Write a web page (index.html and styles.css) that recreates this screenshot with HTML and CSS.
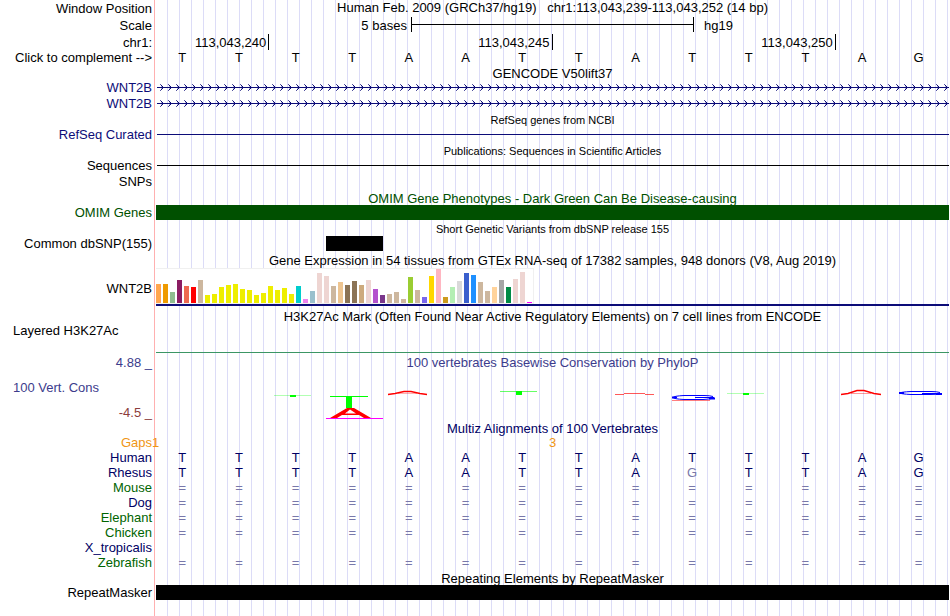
FILE: index.html
```html
<!DOCTYPE html>
<html lang="en">
<head>
<meta charset="utf-8">
<title>Genome browser chr1:113,043,239-113,043,252</title>
<link rel="stylesheet" href="styles.css">
</head>
<body>
<main class="browser">
  <div class="row tall"><span class="label">Window Position</span><h1 class="title">Human Feb. 2009 (GRCh37/hg19) &nbsp; chr1:113,043,239-113,043,252 (14 bp)</h1></div>
  <div class="row tall"><span class="label">Scale</span>
    <div class="data halves"><span class="scale-text">5 bases</span><span class="scale-bar"></span><span class="scale-name">hg19</span></div></div>
  <div class="row ruler"><span class="label">chr1:</span>
    <div class="data halves"><span class="tick first">113,043,240</span><span class="tick">113,043,245</span><span class="tick">113,043,250</span></div></div>
  <div class="row"><button class="label" type="button">Click to complement --&gt;</button><div class="data bases" data-seq="TTTTAATTATTTAG"></div></div>

  <h2 class="title">GENCODE V50lift37</h2>
  <div class="row mid"><a class="label navy" href="#gencode">WNT2B</a>
    <svg class="data gene" aria-hidden="true">
      <defs><pattern id="arrows" width="8" height="16" patternUnits="userSpaceOnUse" fill="#0c0c78"><path d="M5 5h1v1h-1z M6 6h1v1h-1z M7 7h1v1h-1z M6 8h1v1h-1z M5 9h1v1h-1z"/><path d="M4 4h1v1h-1z M4 10h1v1h-1z" opacity=".7"/><path d="M5 6h1v1h-1z M5 8h1v1h-1z" opacity=".3"/></pattern></defs>
      <rect x="1" y="7" width="100%" height="1" fill="#0c0c78"/><rect width="100%" height="16" fill="url(#arrows)"/></svg></div>
  <div class="row mid"><a class="label navy" href="#gencode">WNT2B</a>
    <svg class="data gene" aria-hidden="true"><rect x="1" y="7" width="100%" height="1" fill="#0c0c78"/><rect width="100%" height="16" fill="url(#arrows)"/></svg></div>
  <h2 class="title small snug">RefSeq genes from NCBI</h2>
  <div class="row"><a class="label navy" href="#refseq">RefSeq Curated</a><div class="data line navy"></div></div>
  <h2 class="title small">Publications: Sequences in Scientific Articles</h2>
  <div class="row"><a class="label" href="#pubs">Sequences</a><div class="data line"></div></div>
  <div class="row tall"><a class="label" href="#snps">SNPs</a></div>

  <h2 class="title green">OMIM Gene Phenotypes - Dark Green Can Be Disease-causing</h2>
  <div class="row"><a class="label green" href="#omim">OMIM Genes</a><div class="data block green-block"></div></div>
  <h2 class="title small">Short Genetic Variants from dbSNP release 155</h2>
  <div class="row"><a class="label" href="#dbsnp">Common dbSNP(155)</a><div class="data halves"><span class="snp"></span></div></div>

  <h2 class="title tall">Gene Expression in 54 tissues from GTEx RNA-seq of 17382 samples, 948 donors (V8, Aug 2019)</h2>
  <div class="row gtex"><a class="label" href="#gtex">WNT2B</a><div class="data gtex-line"><div class="bars" id="bars"></div></div></div>

  <div class="row h3k">
    <a class="label left" href="#h3k27ac">Layered H3K27Ac</a>
    <h2 class="data title-text">H3K27Ac Mark (Often Found Near Active Regulatory Elements) on 7 cell lines from ENCODE</h2>
  </div>

  <div class="row cons">
    <div class="label cons-labels blue"><span>4.88 _</span><a class="left" href="#cons">100 Vert. Cons</a><span class="maroon">-4.5 _</span></div>
    <div class="data">
      <h2 class="title-text blue">100 vertebrates Basewise Conservation by PhyloP</h2>
      <svg class="logo" viewBox="156 370 793 50" preserveAspectRatio="none" role="img" aria-label="Conservation scores per base">
        <g fill="#00ff00">
          <path d="M274 395h37v1h-37z M727 393h37v1h-37z" opacity=".3"/>
          <path d="M500 391h37v1h-37z" opacity=".6"/>
          <path d="M290 395h6v2h-6z M330 396h38v1h-38z M346 396h6v12h-6z M516 391h6v4h-6z M743 393h6v2h-6z"/>
        </g>
        <path d="M330 418L347 408H354L371 418H364L359 415H342L337 418z M345 413.500H356L350 409.500z" fill="#ff0000" fill-rule="evenodd"/>
        <path d="M326 418h57v1h-57z" fill="#ff00ff"/>
        <g fill="none" stroke="#ff0000">
          <path d="M388 394.500L395 393.500L404 391.500H411L420 393.500L427 394.500" stroke-width="1.300"/>
          <path d="M398 393.500H417" opacity=".3"/>
          <path d="M615 394.500H624M645 394.500H654M624 393.500H645" opacity=".65"/>
          <path d="M841 394.500L848 393.500L857 390.500H864L874 393.500L881 394.500" stroke-width="1.500"/>
          <path d="M851 393.500H871" opacity=".4"/>
          <path d="M672 400.500H710" opacity=".5"/>
        </g>
        <g fill="none" stroke="#0000ff">
          <path d="M713 396.500Q710 395.500 704 395.500H684Q674 396 673 397.500Q674 399 684 399.500H703Q712 399 714 397.500H695"/>
          <path d="M672 397.500h5M709 398.500h6" stroke-width="2"/>
          <path d="M940 392.500Q937 391.500 931 391.500H911Q901 392 900 393Q901 394 911 394.500H930Q938 394.500 941 393.500H922"/>
          <path d="M899 393h5M936 394h6" stroke-width="2"/>
        </g>
      </svg>
    </div>
  </div>

  <h2 class="title deep">Multiz Alignments of 100 Vertebrates</h2>
  <div class="row"><span class="label orange">Gaps</span><div class="data halves orange"><span class="gap-one">1</span><span class="gap-three">3</span></div></div>
  <div class="row deep"><span class="label">Human</span><div class="data bases" data-seq="TTTTAATTATTTAG"></div></div>
  <div class="row deep"><span class="label">Rhesus</span><div class="data bases" data-seq="TTTTAATTAgTTAG"></div></div>
  <div class="row forest"><span class="label">Mouse</span><div class="data bases" data-seq="=============="></div></div>
  <div class="row deep"><span class="label">Dog</span><div class="data bases" data-seq="=============="></div></div>
  <div class="row forest"><span class="label">Elephant</span><div class="data bases" data-seq="=============="></div></div>
  <div class="row forest"><span class="label">Chicken</span><div class="data bases" data-seq="=============="></div></div>
  <div class="row deep"><span class="label">X_tropicalis</span></div>
  <div class="row forest"><span class="label">Zebrafish</span><div class="data bases" data-seq="=============="></div></div>
  <h2 class="title">Repeating Elements by RepeatMasker</h2>
  <div class="row"><a class="label" href="#rmsk">RepeatMasker</a><div class="data block"></div></div>
</main>
<script src="tracks.js"></script>
</body>
</html>
```
FILE: styles.css
```css
* { box-sizing: border-box; }

body {
  margin: 0;
  background: #fff;
  color: #000;
  font: 13px/15px "Liberation Sans", Arial, sans-serif;
}

a { color: inherit; text-decoration: none; }

.browser {
  min-height: 100vh;
  padding-right: 1px;
  background:
    linear-gradient(#ffb0b0, #ffb0b0) 154px 0 / 1px 100% no-repeat,
    repeating-linear-gradient(90deg, transparent 0 11px, #dcdcf7 11px 12px) 156px 0 / 100% 100% no-repeat;
}

.row {
  display: grid;
  grid-template-columns: 152px minmax(0, 1fr);
  grid-template-rows: 100%;
  column-gap: 4px;
  height: 15px;
}

.mid { height: 16px; line-height: 16px; }
.tall { height: 17px; line-height: 17px; }
.ruler { height: 16px; line-height: 18px; }

.label {
  display: block;
  padding: 0;
  border: 0;
  background: none;
  color: inherit;
  font: inherit;
  text-align: right;
  white-space: nowrap;
}

.left { padding-left: 13px; text-align: left; }

.title,
.title-text {
  margin: 0;
  font-size: 13px;
  font-weight: 400;
  text-align: center;
  white-space: nowrap;
}
h1.title { line-height: 15px; }

h2.title { height: 15px; padding: 1px 0 0 156px; }
h2.title.tall { height: 17px; }
h2.title.small { height: 16px; padding-top: 2px; font-size: 11px; }
h2.title.snug { height: 15px; padding-top: 1px; }

.navy { color: #0c0c78; }
.green { color: #005000; }
.blue { color: #3c3c8c; }
.maroon { color: #8c3c3c; }
.deep { color: #000064; }
.forest { color: #006400; }
.orange { color: #f09614; }

.halves { display: grid; grid-template-columns: repeat(28, minmax(0, 1fr)); }

.scale-text { grid-column: 1 / 10; padding-right: 4px; text-align: right; }
.scale-name { grid-column: 20 / 29; padding-left: 10px; }
.scale-bar {
  grid-column: 10 / 20;
  height: 15px;
  border: solid #000;
  border-width: 0 1px;
  background: linear-gradient(#000, #000) center / 100% 1px no-repeat;
}

.tick {
  grid-column: span 10;
  height: 16px;
  padding-right: 2px;
  border-right: 1px solid #000;
  text-align: right;
}
.tick.first { grid-column: 1 / 5; }

.bases {
  display: grid;
  grid-template-columns: repeat(14, minmax(0, 1fr));
  text-align: center;
}
.bases span { padding-right: 4px; }
.bases .faded { color: #7878aa; }

.gene { width: 100%; height: 16px; }
.line { height: 1px; margin: 7px 0 0 1px; background: currentColor; }
.block { background: #000; }
.green-block { background: #005000; }
.snp { grid-column: 7 / 9; background: #000; }

.gtex { height: 38px; line-height: 42px; }
.gtex-line { border-bottom: 2px solid #0c0c78; }
.bars {
  display: flex;
  align-items: flex-end;
  gap: 2px;
  width: 378px;
  height: 36px;
  border: solid #f0f0f0;
  border-width: 1px 1px 1px 0;
  background: #fff;
}
.bars span { width: 5px; }

.h3k {
  height: 47px;
  background: linear-gradient(#3c9664, #3c9664) 156px 100% / 100% 1px no-repeat;
}
.h3k .label { padding-top: 17px; }
.h3k h2 { padding-top: 3px; }

.cons { height: 67px; }
.cons-labels { display: flex; flex-direction: column; justify-content: space-between; padding: 2px 0 0; }
.cons h2 { padding-top: 2px; }
.logo { display: block; width: 100%; height: 50px; }

.gap-one { margin-left: -4px; }
.gap-three { grid-column: 14 / 16; text-align: center; }
```
FILE: tracks.js
```js
// Base letters, one cell per position; lower case marks a mismatch.
document.querySelectorAll("[data-seq]").forEach(function (row) {
  for (const base of row.dataset.seq) {
    const cell = document.createElement("span");
    cell.textContent = base.toUpperCase();
    if (base === "=" || base !== base.toUpperCase()) cell.className = "faded";
    row.append(cell);
  }
});

// Median expression per tissue: [height, colour].
const tan = "#cdb79e", yellow = "#eeee00", rose = "#eed5d2";
const tissues = [
  [19, "#ffa54f"], [19, "#ee9a00"], [11, "#8fbc8f"], [23, "#8b1c62"], [17, "#ee6a50"], [16, "#ff0000"], [23, tan],
  [8, yellow], [9, yellow], [16, yellow], [18, yellow], [19, yellow], [14, yellow], [13, yellow], [8, yellow],
  [10, yellow], [17, yellow], [13, yellow], [15, yellow], [9, yellow],
  [17, "#00cdcd"], [4, "#ee82ee"], [12, "#9ac0cd"], [30, rose], [27, rose], [17, tan], [21, "#eec591"],
  [18, "#8b7355"], [22, "#8b7355"], [18, "#cdaa7d"], [23, rose], [14, "#b452cd"], [8, "#7a378b"], [9, tan],
  [11, tan], [4, tan], [26, "#9acd32"], [13, tan], [6, "#7a67ee"], [27, "#ffd700"], [34, "#ffb6c1"],
  [6, "#cd9b1d"], [16, "#b4eeb4"], [22, "#d9d9d9"], [30, "#3a5fcd"], [28, "#1e90ff"], [21, tan], [12, tan],
  [16, "#ffd39b"], [23, "#a6a6a6"], [16, "#008b45"], [24, rose], [31, rose], [1, "#ff00ff"]
];
const bars = document.getElementById("bars");
for (const [height, colour] of tissues) {
  const bar = document.createElement("span");
  bar.style.height = height + "px";
  bar.style.background = colour;
  bars.append(bar);
}
```
